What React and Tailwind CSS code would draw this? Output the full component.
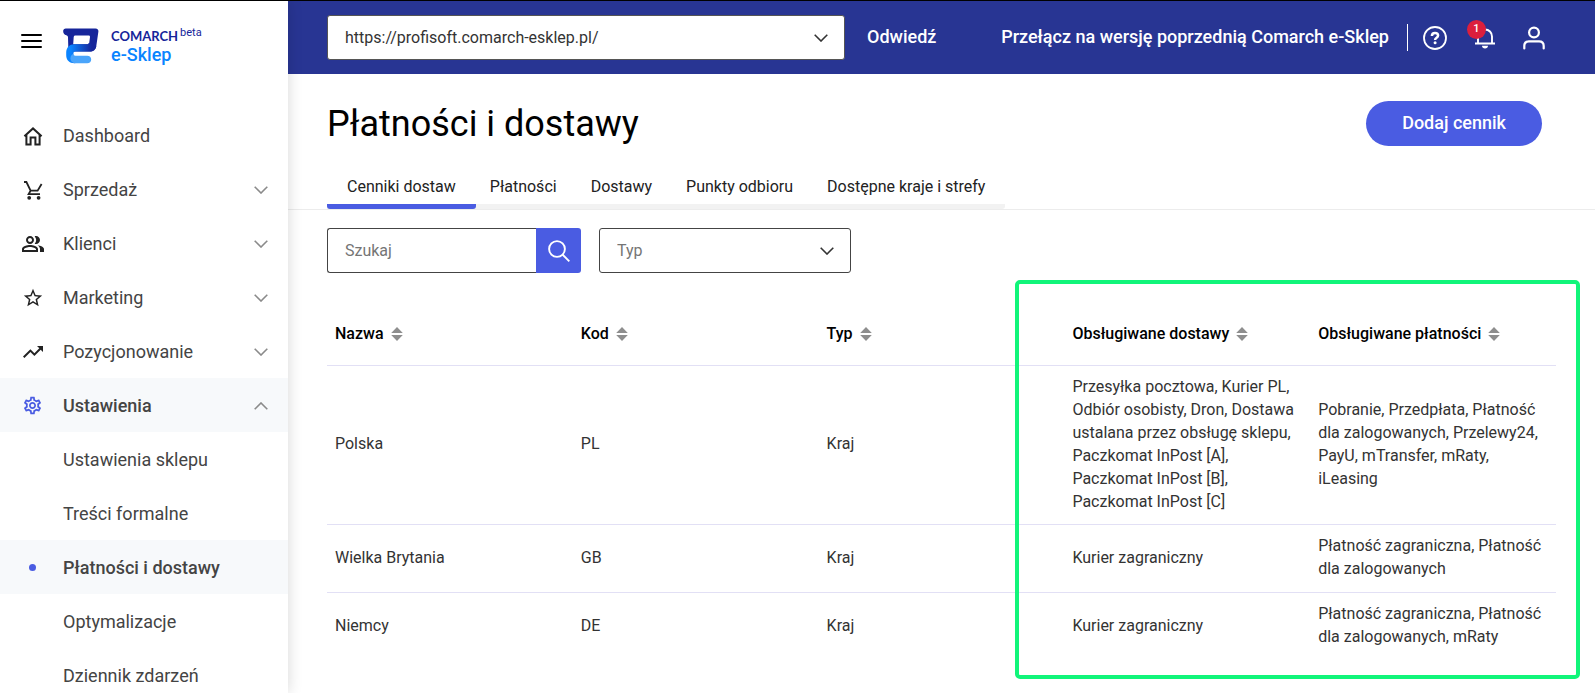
import { useState } from "react";
import {
  MdOutlinePeopleAlt,
  MdTrendingUp,
  MdStarOutline,
  MdOutlineSettings,
} from "react-icons/md";

const NAV = [
  { label: "Dashboard", icon: "home" },
  { label: "Sprzedaż", icon: "cart", chevron: "down" },
  { label: "Klienci", icon: "people", chevron: "down" },
  { label: "Marketing", icon: "star", chevron: "down" },
  { label: "Pozycjonowanie", icon: "trend", chevron: "down" },
  { label: "Ustawienia", icon: "gear", chevron: "up", active: true },
  { label: "Ustawienia sklepu" },
  { label: "Treści formalne" },
  { label: "Płatności i dostawy", active: true, dot: true },
  { label: "Optymalizacje" },
  { label: "Dziennik zdarzeń" },
];

const TABS = ["Cenniki dostaw", "Płatności", "Dostawy", "Punkty odbioru", "Dostępne kraje i strefy"];

const COLUMNS = ["Nazwa", "Kod", "Typ", "Obsługiwane dostawy", "Obsługiwane płatności"];

const ROWS = [
  [
    "Polska",
    "PL",
    "Kraj",
    "Przesyłka pocztowa, Kurier PL, Odbiór osobisty, Dron, Dostawa ustalana przez obsługę sklepu, Paczkomat InPost [A], Paczkomat InPost [B], Paczkomat InPost [C]",
    "Pobranie, Przedpłata, Płatność dla zalogowanych, Przelewy24, PayU, mTransfer, mRaty, iLeasing",
  ],
  ["Wielka Brytania", "GB", "Kraj", "Kurier zagraniczny", "Płatność zagraniczna, Płatność dla zalogowanych"],
  ["Niemcy", "DE", "Kraj", "Kurier zagraniczny", "Płatność zagraniczna, Płatność dla zalogowanych, mRaty"],
];

function NavIcon({ name }) {
  switch (name) {
    case "home":
      return (
        <svg width="20" height="20" viewBox="0 0 20 20" fill="none" stroke="currentColor" strokeWidth="2">
          <path d="M3.400 8.200V18.400h4.200v-6.800h4.800v6.800h4.200V8.200M1.400 10.200 10 2.400l8.600 7.800" />
        </svg>
      );
    case "cart":
      return (
        <svg width="20" height="20" viewBox="0 0 20 20" fill="none" stroke="currentColor" strokeWidth="1.800">
          <path d="M1 2h2.400l4.200 8.600h7L18.600 4M7.600 10.600 5.600 14.200H17" />
          <circle cx="6.200" cy="17.800" r="1" />
          <circle cx="15.600" cy="17.800" r="1" />
        </svg>
      );
    case "people":
      return <MdOutlinePeopleAlt size={24} />;
    case "star":
      return <MdStarOutline size={22} />;
    case "trend":
      return <MdTrendingUp size={24} />;
    default:
      return <MdOutlineSettings size={21} className="text-[#4a5ce2]" />;
  }
}

function Chevron({ up = false, className = "" }) {
  return (
    <svg className={className} width="14" height="8" viewBox="0 0 14 8" fill="none" stroke="currentColor" strokeWidth="1.600">
      <path d={up ? "M.7 7.300 7 1l6.300 6.300" : "M.7.7 7 7 13.300.7"} />
    </svg>
  );
}

function Logo() {
  return (
    <svg width="36" height="36" viewBox="0 0 36 36" aria-hidden="true">
      <defs>
        <linearGradient id="swoosh" x1="0" x2="1">
          <stop offset="0.150" stopColor="#0a84ff" />
          <stop offset="0.850" stopColor="#16259a" />
        </linearGradient>
      </defs>
      <path
        fillRule="evenodd"
        d="M2.800.4h29.700c2 0 3.200 1.300 2.900 3.200L33.300 18c-.6 3.600-3 5.600-6.600 5.600H5.400L5 9.200C4.900 8 4.400 7.600 3.200 7.200 1.400 6.600.2 5.200.2 3.400V2.800C.2 1.400 1.300.4 2.800.4ZM12.400 7.400c-1 0-1.600.6-1.700 1.600l-.5 7.200h14.600c.8 0 1.300-.4 1.400-1.200l.8-6c.1-1-.4-1.600-1.400-1.600Z"
        fill="#16259a"
      />
      <path
        d="M11.500 16.200h13.300c.8 0 1.300-.4 1.400-1.200l7.100 3c-.6 3.600-3 5.600-6.600 5.600H12.600c-1.500 0-2.200.9-2.200 2.200v2.600l1.800 6.800h-.8C6.400 35.200 3.200 32 3.200 27.200v-2.600c0-5.200 3.300-8.400 8.300-8.400Z"
        fill="url(#swoosh)"
      />
      <path
        d="M10.400 25.800c0 1.200.7 2 2 2h11.800c2.500 0 4 1.500 4 3.700s-1.500 3.700-4 3.700H12c-2.800 0-4.600-2-4.600-4.700 0-2.200 1.200-3.900 3-4.700Z"
        fill="#4aa5fb"
      />
    </svg>
  );
}

function Sidebar() {
  return (
    <aside className="relative z-10 w-72 shrink-0 overflow-hidden bg-white shadow-[0_0_14px_rgba(0,0,0,0.16)]">
      <div className="flex h-[107px] items-start px-[21px] pt-[27px]">
        <button type="button" aria-label="Menu" className="mt-[6px] flex w-[42px] flex-col gap-1">
          <span className="h-[2px] w-[21px] rounded-full bg-black" />
          <span className="h-[2px] w-[21px] rounded-full bg-black" />
          <span className="h-[2px] w-[21px] rounded-full bg-black" />
        </button>
        <a href="#home" className="flex items-start">
          <Logo />
          <span className="ml-3 flex flex-col">
            <span className="flex h-[17px] items-start text-[#16259a]">
              <span className="font-[Lato,sans-serif] text-[13px] leading-4 font-bold">COMARCH</span>
              <span className="ml-[2px] text-[11px] leading-[10px]">beta</span>
            </span>
            <span className="text-[18px] leading-5 font-medium text-[#0a84ff]">e-Sklep</span>
          </span>
        </a>
      </div>
      <nav>
        <ul>
          {NAV.map((item) => (
            <li key={item.label}>
              <a
                href="#nav"
                className={`flex h-[54px] items-center pt-px pr-5 text-[18px] text-[#444] ${
                  item.active ? "bg-[#f7f9fb] font-medium" : ""
                }`}
              >
                <span className="flex w-[63px] justify-center pl-[2px] text-[#222]">
                  {item.icon && <NavIcon name={item.icon} />}
                  {item.dot && <span className="size-[7px] rounded-full bg-[#4a5ce2]" />}
                </span>
                <span className="flex-1 pb-px">{item.label}</span>
                {item.chevron && <Chevron up={item.chevron === "up"} className="text-[#8a8a8a]" />}
              </a>
            </li>
          ))}
        </ul>
      </nav>
    </aside>
  );
}

function TopBar() {
  return (
    <header className="flex h-[73px] items-center bg-[#283593] pr-[50px] pl-[39px] text-white">
      <div className="relative w-[518px]">
        <select
          aria-label="Adres sklepu"
          className="h-[45px] w-full appearance-none rounded-[3px] border border-[#555] bg-white px-[17px] text-base text-[#333]"
        >
          <option>https://profisoft.comarch-esklep.pl/</option>
        </select>
        <Chevron className="pointer-events-none absolute top-[19px] right-[17px] text-[#333]" />
      </div>
      <a href="#visit" className="ml-[22px] pb-[2px] text-[18px] font-medium">
        Odwiedź
      </a>
      <a href="#previous" className="ml-auto pb-[2px] text-[18px] font-medium">
        Przełącz na wersję poprzednią Comarch e-Sklep
      </a>
      <span className="ml-[18px] h-[27px] w-px bg-white" />
      <button type="button" aria-label="Pomoc" className="ml-[15px]">
        <svg width="24" height="24" viewBox="0 0 24 24" fill="none" stroke="currentColor">
          <circle cx="12" cy="12" r="11" strokeWidth="1.800" />
          <path d="M8.900 9.900c0-1.900 1.300-3 3.100-3s3.100 1.100 3.100 2.700c0 2.300-3 2.100-3 4.300" strokeWidth="2.500" />
          <circle cx="12.100" cy="16.800" r="1.500" fill="currentColor" stroke="none" />
        </svg>
      </button>
      <button type="button" aria-label="Powiadomienia" className="relative ml-[27px]">
        <svg width="22" height="22" viewBox="0 0 22 22" fill="none" stroke="currentColor" strokeWidth="1.900">
          <path d="M1 16.500h20M4 16.500V9.500C4 5.500 7 2.500 11 2.500s7 3 7 7v7" />
          <path d="M8 18.800h6c0 1.700-1.300 2.700-3 2.700s-3-1-3-2.700Z" fill="currentColor" stroke="none" />
        </svg>
        <span className="absolute -top-[7px] -left-[7px] flex size-[19px] items-center justify-center rounded-full bg-[#dc1f3d] text-[11px] font-medium">
          1
        </span>
      </button>
      <button type="button" aria-label="Konto" className="ml-[27px]">
        <svg width="22" height="24" viewBox="0 0 22 24" fill="none" stroke="currentColor" strokeWidth="2.200" strokeLinecap="round">
          <circle cx="11" cy="6.500" r="4.900" />
          <path d="M1.300 22.500V20c0-2.800 1.900-4.600 4.600-4.600h10.200c2.700 0 4.600 1.800 4.600 4.600v2.500" />
        </svg>
      </button>
    </header>
  );
}

function Tabs() {
  const [active, setActive] = useState(0);
  return (
    <div className="flex h-[60px] border-b border-[#ececec] pl-[39px]">
      <div role="tablist" className="flex rounded-r-[3px] border-b-[5px] border-[#f2f2f2]">
        {TABS.map((tab, i) => (
          <button
            key={tab}
            type="button"
            role="tab"
            aria-selected={i === active}
            onClick={() => setActive(i)}
            className={`-mb-[5px] flex items-center border-b-[5px] pt-5 text-base text-[#222] ${
              i === active ? "rounded-[3px] border-[#4a5ce2] px-5" : "border-transparent pr-5 pl-[14px]"
            }`}
          >
            {tab}
          </button>
        ))}
      </div>
    </div>
  );
}

function Filters() {
  return (
    <div className="flex gap-[18px] pt-[18px]">
      <form className="flex h-[45px] w-[254px]">
        <input
          type="text"
          aria-label="Szukaj"
          placeholder="Szukaj"
          className="w-full min-w-0 rounded-l-[3px] border border-r-0 border-[#444] px-[17px] text-base placeholder:text-[#757575]"
        />
        <button
          type="button"
          aria-label="Wyszukaj"
          className="flex w-[45px] shrink-0 items-center justify-center rounded-r-[3px] bg-[#4a5ce2] text-white"
        >
          <svg width="22" height="22" viewBox="0 0 22 22" fill="none" stroke="currentColor" strokeWidth="1.900">
            <circle cx="9" cy="9" r="7.900" />
            <path d="m14.500 14.500 6.800 6.800" />
          </svg>
        </button>
      </form>
      <div className="relative w-[252px]">
        <select
          aria-label="Typ"
          className="h-[45px] w-full appearance-none rounded-[3px] border border-[#444] bg-white px-[17px] text-base text-[#757575]"
        >
          <option>Typ</option>
        </select>
        <Chevron className="pointer-events-none absolute top-[19px] right-[17px] text-[#333]" />
      </div>
    </div>
  );
}

function PriceTable() {
  return (
    <div className="relative mt-[19px]">
      <table className="w-full table-fixed border-collapse text-left">
        <thead>
          <tr className="h-[73px] border-b border-[#e2e0f5]">
            {COLUMNS.map((name) => (
              <th key={name} scope="col" className="px-2 pt-3 font-medium text-black">
                <button type="button" className="flex items-center gap-[7px] whitespace-nowrap">
                  {name}
                  <svg width="12" height="14" viewBox="0 0 12 14" fill="#8e8e8e">
                    <path d="M6 0l5.800 6H.2ZM6 14l5.800-6H.2Z" />
                  </svg>
                </button>
              </th>
            ))}
          </tr>
        </thead>
        <tbody>
          {ROWS.map((row) => (
            <tr key={row[1]} className="h-[68px] border-b border-[#e2e0f5] last:border-b-0">
              {row.map((cell, i) => (
                <td key={i} className="px-2 pt-[9px] pb-[11px] leading-[23px] text-[#333]">
                  {cell}
                </td>
              ))}
            </tr>
          ))}
        </tbody>
      </table>
      <div className="pointer-events-none absolute -top-3 -right-6 -bottom-[19px] left-[56%] rounded-[5px] border-4 border-[#11f57a]" />
    </div>
  );
}

export default function App() {
  return (
    <div className="flex h-screen flex-col overflow-hidden border-t border-black bg-white font-[Roboto,sans-serif] text-base text-[#333]">
      <div className="flex min-h-0 flex-1">
        <Sidebar />
        <div className="min-w-0 flex-1">
          <TopBar />
          <main>
            <div className="flex h-[76px] items-end justify-between pr-[53px] pl-[39px]">
              <h1 className="pb-[5px] text-[36px] leading-[42px] text-black">Płatności i dostawy</h1>
              <button type="button" className="mb-1 h-[45px] rounded-full bg-[#4a5ce2] px-9 pb-[2px] text-[18px] font-medium text-white">
                Dodaj cennik
              </button>
            </div>
            <Tabs />
            <div className="pr-[39px] pl-[39px]">
              <Filters />
              <PriceTable />
            </div>
          </main>
        </div>
      </div>
    </div>
  );
}
